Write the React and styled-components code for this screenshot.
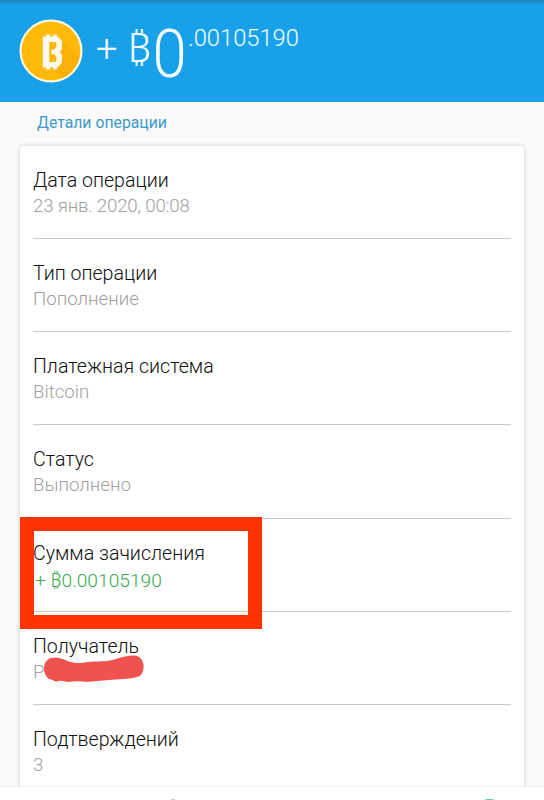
import styled, { createGlobalStyle } from "styled-components";

const GlobalStyle = createGlobalStyle`
  * {
    box-sizing: border-box;
  }
  body {
    margin: 0;
    background: #fafafa;
    font-family: Roboto, "Noto Sans", sans-serif;
    font-weight: 300;
  }
`;

const Screen = styled.div`
  display: flex;
  flex-direction: column;
  height: 800px;
  overflow: hidden;
`;

const Header = styled.header`
  display: flex;
  flex-shrink: 0;
  align-items: flex-start;
  height: 102px;
  padding: 19px 0 0 19px;
  color: #f4fdff;
  background: linear-gradient(#1684bd, #18a1e8 5px);
`;

const CoinIcon = styled.svg`
  width: 64px;
  height: 64px;
`;

const Plus = styled.span`
  margin: 8px 0 0 13px;
  font-size: 38px;
  line-height: 44px;
`;

const Currency = styled.span`
  margin: 7px 0 0 10px;
  font-size: 41px;
  line-height: 44px;
`;

const Whole = styled.span`
  margin-top: 1px;
  font-size: 67px;
  line-height: 68px;
  transform: scaleX(0.92);
`;

const Fraction = styled.span`
  margin: 5px 0 0 0;
  font-size: 23.7px;
  line-height: 28px;
`;

const Content = styled.main`
  flex: 1;
  min-height: 0;
  padding: 0 20px;
  overflow: hidden;
`;

const SectionTitle = styled.h2`
  margin: 0;
  padding: 11px 0 13px 17px;
  color: #3e9acb;
  font-size: 15.8px;
  font-weight: 400;
  line-height: 20px;
`;

const Card = styled.section`
  height: 700px;
  padding: 0 13px;
  border-radius: 3px;
  background: #fff;
  box-shadow: 0 0 4px rgba(0, 0, 0, 0.2);
`;

const Row = styled.div`
  position: relative;
  height: 93.15px;
  padding-top: 22px;
  border-bottom: 1px solid #c8c8c8;
`;

const Label = styled.div`
  color: #111;
  font-size: 19.6px;
  line-height: 26px;
  white-space: nowrap;
`;

const Value = styled.div`
  padding: ${(props) => (props.$income ? "1px 0 0 2px" : "0")};
  color: ${(props) => (props.$income ? "#35a853" : "#a0a0a0")};
  font-size: ${(props) => (props.$income ? 19.2 : 18.7)}px;
  letter-spacing: ${(props) => (props.$tight ? -0.2 : 0)}px;
  line-height: ${(props) => (props.$income ? 26 : 25)}px;
  white-space: nowrap;
`;

const Highlight = styled.div`
  position: absolute;
  top: -2px;
  left: -13px;
  width: 242px;
  height: 112px;
  border: 14px solid #ff3300;
`;

const Scribble = styled.svg`
  position: absolute;
  top: 42px;
  left: 10px;
  width: 102px;
  height: 30px;
`;

const BottomBar = styled.footer`
  position: relative;
  display: flex;
  flex-shrink: 0;
  align-items: flex-end;
  justify-content: space-between;
  height: 13px;
  padding: 0 50px 0 171px;
  background: #fff;
  box-shadow: 0 -1px 1px rgba(0, 0, 0, 0.04);
`;

const Mark = styled.span`
  width: ${(props) => props.$width}px;
  height: 1px;
  border-radius: 1px 1px 0 0;
  background: ${(props) => props.$color};
`;

const details = [
  { label: "Дата операции", value: "23 янв. 2020, 00:08", tight: true },
  { label: "Тип операции", value: "Пополнение" },
  { label: "Платежная система", value: "Bitcoin" },
  { label: "Статус", value: "Выполнено" },
  { label: "Сумма зачисления", value: "+ ₿0.00105190", income: true },
  { label: "Получатель", value: "P", hidden: true },
  { label: "Подтверждений", value: "3" },
];

function BitcoinIcon() {
  return (
    <CoinIcon viewBox="0 0 64 64">
      <circle cx="32" cy="32" r="30.5" fill="#ffb90a" />
      <path d="M43 24 61 38Q58 52 45 60L31 49 42 46Z" fill="#f7a608" opacity=".5" />
      <circle cx="32" cy="32" r="30.4" fill="none" stroke="#fff6dc" strokeWidth="2.2" />
      <path
        d="M29 15.5v5M36 15.5v5M29 45v5.5M36 45v5.5"
        stroke="#fffaf0"
        strokeWidth="3.8"
      />
      <path
        d="M24 20.2H37.5L40.2 23V29L37 32.8 40.2 36.5V42.5L37.5 45.8H24"
        fill="none"
        stroke="#fffaf0"
        strokeWidth="5.6"
        strokeLinejoin="round"
      />
      <path d="M27 18v30" stroke="#fffaf0" strokeWidth="6.5" />
      <path d="M32.5 32.8H39" stroke="#fffaf0" strokeWidth="4.5" />
    </CoinIcon>
  );
}

function App() {
  return (
    <>
      <GlobalStyle />
      <Screen>
        <Header>
          <BitcoinIcon />
          <Plus>+</Plus>
          <Currency>₿</Currency>
          <Whole>0</Whole>
          <Fraction>.00105190</Fraction>
        </Header>
        <Content>
          <SectionTitle>Детали операции</SectionTitle>
          <Card>
            {details.map((item) => (
              <Row key={item.label}>
                {item.income && <Highlight />}
                <Label>{item.label}</Label>
                <Value $income={item.income} $tight={item.tight}>
                  {item.value}
                </Value>
                {item.hidden && (
                  <Scribble viewBox="0 0 102 30">
                    <path
                      d="M9 4C18 1 24 10 39 9 50 6 60 9 73 5 83 2 91 0 96 3 102 7 102 17 97 22 88 26 69 25 55 27 42 29 35 26 26 28 22 28 20 26 16 27 12 29 10 25 6 25 1 21 0 15 2 9 4 6 6 4 9 4Z"
                      fill="#ef5350"
                    />
                  </Scribble>
                )}
              </Row>
            ))}
          </Card>
        </Content>
        <BottomBar>
          <Mark $width={4} $color="#c5c5c5" />
          <Mark $width={9} $color="#83c9b8" />
        </BottomBar>
      </Screen>
    </>
  );
}

export default App;
